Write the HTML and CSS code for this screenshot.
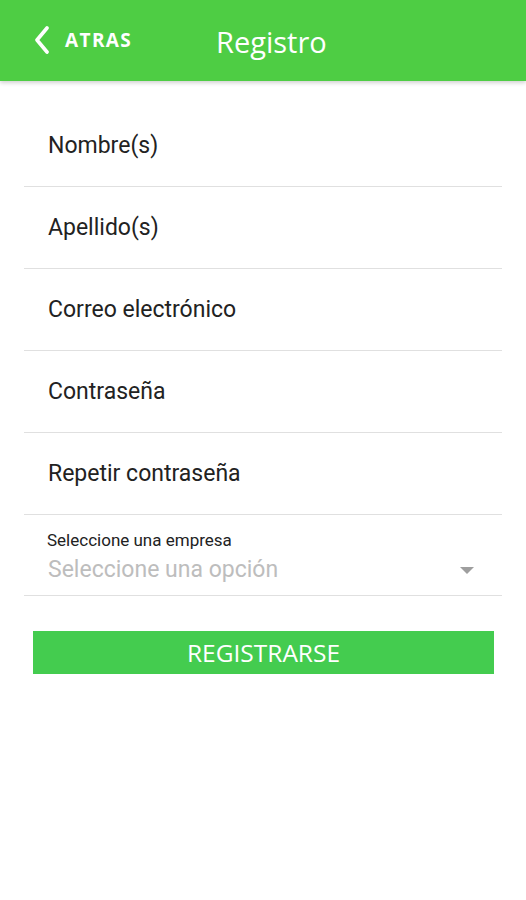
FILE: index.html
```html
<!doctype html>
<html>
<head>
<meta charset="UTF-8">
<title>Registro</title>
<link rel="stylesheet" href="styles.css">
</head>
<body>
<div class="header">
	<div class="back">
		<svg class="chev" width="18" height="28" viewBox="0 0 18 28"><path d="M14 2 L4 14 L14 26" fill="none" stroke="#fff" stroke-width="3.6" stroke-linecap="round" stroke-linejoin="round"/></svg>
		<span>ATRAS</span>
	</div>
	<div class="title">Registro</div>
</div>
<form class="form">
	<div class="field">Nombre(s)</div>
	<div class="field">Apellido(s)</div>
	<div class="field">Correo electrónico</div>
	<div class="field">Contraseña</div>
	<div class="field">Repetir contraseña</div>
	<div class="select">
		<div class="sel_label">Seleccione una empresa</div>
		<div class="sel_row">
			<span>Seleccione una opción</span>
			<i class="caret"></i>
		</div>
	</div>
	<div class="btn">REGISTRARSE</div>
</form>
</body>
</html>
```

FILE: styles.css
```css
body{
	margin:0;
	background:#fff;
	font-family:Roboto,"Liberation Sans",sans-serif;
}
.header{
	height:81px;
	background:#4ecd44;
	display:flex;
	align-items:center;
	color:#fff;
	box-shadow:0 2px 4px rgba(0,0,0,0.18);
	position:relative;
}
.back{
	display:flex;
	align-items:center;
	padding-left:33px;
	width:216px;
	box-sizing:border-box;
	margin-top:-1px;
}
.chev{margin-right:14px}
.back span{
	font-family:"Open Sans",sans-serif;
	font-weight:700;
	font-size:19px;
	letter-spacing:1.4px;
}
.title{
	font-family:"Open Sans",sans-serif;
	font-size:29px;
	margin-top:2px;
}
.form{
	margin:24px 24px 0;
}
.field{
	height:81px;
	border-bottom:1px solid #e0e0e0;
	display:flex;
	align-items:center;
	padding-left:24px;
	font-size:23px;
	color:#222;
}
.select{
	height:81px;
	border-bottom:1px solid #e0e0e0;
	padding:15px 28px 0 23px;
	box-sizing:border-box;
}
.sel_label{
	font-size:17px;
	color:#222;
	line-height:20px;
}
.sel_row{
	display:flex;
	justify-content:space-between;
	align-items:center;
	font-size:23px;
	color:#bdbdbd;
	line-height:30px;
	margin-top:5px;
	padding-left:1px;
}
.caret{
	width:0;height:0;
	border-left:7px solid transparent;
	border-right:7px solid transparent;
	border-top:7px solid #9e9e9e;
}
.btn{
	margin:35px 8px 0 9px;
	height:43px;
	background:#44cc4f;
	color:#fff;
	display:flex;
	align-items:center;
	justify-content:center;
	font-family:"Open Sans",sans-serif;
	font-size:24.5px;
}
```
